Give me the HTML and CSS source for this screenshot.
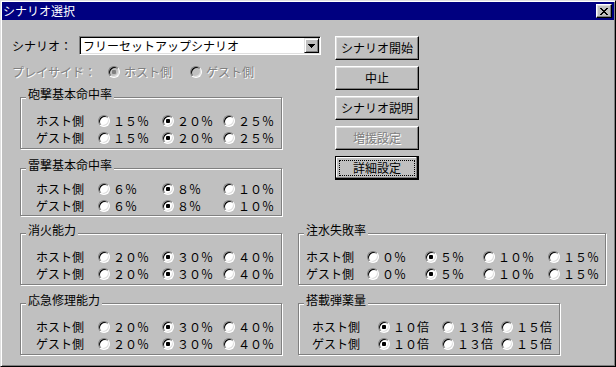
FILE: index.html
```html
<!doctype html>
<html>
  <head>
    <meta charset="UTF-8">
    <title>シナリオ選択</title>
    <link rel="stylesheet" href="styles.css">
  </head>
  <body>
    <div class="window">
      <div class="titlebar">
        <span class="title">シナリオ選択</span>
        <button class="close-btn" type="button" aria-label="閉じる">
          <svg width="8" height="7" viewBox="0 0 8 7" shape-rendering="crispEdges">
            <path d="M0 0h2v1H0zM6 0h2v1H6zM1 1h2v1H1zM5 1h2v1H5zM2 2h4v1H2zM3 3h2v1H3zM2 4h4v1H2zM1 5h2v1H1zM5 5h2v1H5zM0 6h2v1H0zM6 6h2v1H6z"/>
          </svg>
        </button>
      </div>

      <main class="content">
        <div class="top">
          <div class="top-left">
            <div class="scenario-row">
              <span class="row-label">シナリオ：</span>
              <div class="combo">
                <span class="combo-text">フリーセットアップシナリオ</span>
                <span class="combo-btn">
                  <svg width="7" height="4" viewBox="0 0 7 4" shape-rendering="crispEdges">
                    <path d="M0 0h7v1H0zM1 1h5v1H1zM2 2h3v1H2zM3 3h1v1H3z"/>
                  </svg>
                </span>
              </div>
            </div>

            <div class="side-row disabled">
              <span class="row-label">プレイサイド：</span>
              <label class="opt"><input type="radio" name="side" checked disabled><span>ホスト側</span></label>
              <label class="opt"><input type="radio" name="side" disabled><span>ゲスト側</span></label>
            </div>

            <fieldset class="group">
              <legend>砲撃基本命中率</legend>
              <div class="grid grid-left">
                <span>ホスト側</span>
                <label class="opt"><input type="radio" name="hou-h">１５％</label>
                <label class="opt"><input type="radio" name="hou-h" checked>２０％</label>
                <label class="opt"><input type="radio" name="hou-h">２５％</label>
                <span>ゲスト側</span>
                <label class="opt"><input type="radio" name="hou-g">１５％</label>
                <label class="opt"><input type="radio" name="hou-g" checked>２０％</label>
                <label class="opt"><input type="radio" name="hou-g">２５％</label>
              </div>
            </fieldset>

            <fieldset class="group">
              <legend>雷撃基本命中率</legend>
              <div class="grid grid-left grid-compact">
                <span>ホスト側</span>
                <label class="opt"><input type="radio" name="rai-h">６％</label>
                <label class="opt"><input type="radio" name="rai-h" checked>８％</label>
                <label class="opt"><input type="radio" name="rai-h">１０％</label>
                <span>ゲスト側</span>
                <label class="opt"><input type="radio" name="rai-g">６％</label>
                <label class="opt"><input type="radio" name="rai-g" checked>８％</label>
                <label class="opt"><input type="radio" name="rai-g">１０％</label>
              </div>
            </fieldset>
          </div>

          <div class="buttons">
            <button class="btn" type="button">シナリオ開始</button>
            <button class="btn" type="button">中止</button>
            <button class="btn" type="button">シナリオ説明</button>
            <button class="btn" type="button" disabled>増援設定</button>
            <button class="btn btn-default" type="button"><span class="focus">詳細設定</span></button>
          </div>
        </div>

        <div class="bottom">
          <fieldset class="group">
            <legend>消火能力</legend>
            <div class="grid grid-left">
              <span>ホスト側</span>
              <label class="opt"><input type="radio" name="fire-h">２０％</label>
              <label class="opt"><input type="radio" name="fire-h" checked>３０％</label>
              <label class="opt"><input type="radio" name="fire-h">４０％</label>
              <span>ゲスト側</span>
              <label class="opt"><input type="radio" name="fire-g">２０％</label>
              <label class="opt"><input type="radio" name="fire-g" checked>３０％</label>
              <label class="opt"><input type="radio" name="fire-g">４０％</label>
            </div>
          </fieldset>

          <fieldset class="group group-wide">
            <legend>注水失敗率</legend>
            <div class="grid grid-flood">
              <span>ホスト側</span>
              <label class="opt"><input type="radio" name="flood-h">０％</label>
              <label class="opt"><input type="radio" name="flood-h" checked>５％</label>
              <label class="opt"><input type="radio" name="flood-h">１０％</label>
              <label class="opt"><input type="radio" name="flood-h">１５％</label>
              <span>ゲスト側</span>
              <label class="opt"><input type="radio" name="flood-g">０％</label>
              <label class="opt"><input type="radio" name="flood-g" checked>５％</label>
              <label class="opt"><input type="radio" name="flood-g">１０％</label>
              <label class="opt"><input type="radio" name="flood-g">１５％</label>
            </div>
          </fieldset>

          <fieldset class="group">
            <legend>応急修理能力</legend>
            <div class="grid grid-left">
              <span>ホスト側</span>
              <label class="opt"><input type="radio" name="repair-h">２０％</label>
              <label class="opt"><input type="radio" name="repair-h" checked>３０％</label>
              <label class="opt"><input type="radio" name="repair-h">４０％</label>
              <span>ゲスト側</span>
              <label class="opt"><input type="radio" name="repair-g">２０％</label>
              <label class="opt"><input type="radio" name="repair-g" checked>３０％</label>
              <label class="opt"><input type="radio" name="repair-g">４０％</label>
            </div>
          </fieldset>

          <fieldset class="group">
            <legend>搭載弾薬量</legend>
            <div class="grid grid-ammo">
              <span>ホスト側</span>
              <label class="opt"><input type="radio" name="ammo-h" checked>１０倍</label>
              <label class="opt"><input type="radio" name="ammo-h">１３倍</label>
              <label class="opt"><input type="radio" name="ammo-h">１５倍</label>
              <span>ゲスト側</span>
              <label class="opt"><input type="radio" name="ammo-g" checked>１０倍</label>
              <label class="opt"><input type="radio" name="ammo-g">１３倍</label>
              <label class="opt"><input type="radio" name="ammo-g">１５倍</label>
            </div>
          </fieldset>
        </div>
      </main>
    </div>
  </body>
</html>
```

FILE: styles.css
```css
* {
    box-sizing: border-box;
}

body {
    margin: 0;
    background: #c0c0c0;
    color: #000;
    font: 12px/1 "Noto Sans CJK JP", sans-serif;
}

.window {
    width: 616px;
    height: 367px;
    padding: 1px;
    background: #c0c0c0;
    border: 1px solid;
    border-color: #dfdfdf #000 #000 #dfdfdf;
    box-shadow: inset 1px 1px #fff, inset -1px -1px #808080;
}

/* title bar */
.titlebar {
    display: flex;
    align-items: center;
    justify-content: space-between;
    height: 18px;
    padding: 0 2px 0 1px;
    background: #000080;
    color: #fff;
}

.close-btn {
    display: flex;
    align-items: center;
    justify-content: center;
    width: 16px;
    height: 14px;
    padding: 0;
    background: #c0c0c0;
    border: 1px solid;
    border-color: #fff #000 #000 #fff;
    box-shadow: inset -1px -1px #808080, inset 1px 1px #dfdfdf;
}

/* body */
.content {
    padding: 16px 0 0 10px;
}

.top {
    display: flex;
    align-items: flex-start;
}

.top-left {
    width: 309px;
}

.scenario-row {
    display: flex;
    align-items: center;
    gap: 7px;
}

.row-label {
    white-space: nowrap;
}

.combo {
    display: flex;
    align-items: center;
    width: 242px;
    height: 19px;
    padding: 1px 1px 1px 3px;
    background: #fff;
    border: 1px solid;
    border-color: #808080 #fff #fff #808080;
    box-shadow: inset 1px 1px #000, inset -1px -1px #dfdfdf;
}

.combo-text {
    flex: 1;
}

.combo-btn {
    display: flex;
    align-items: center;
    justify-content: center;
    width: 15px;
    height: 15px;
    background: #c0c0c0;
    border: 1px solid;
    border-color: #dfdfdf #000 #000 #dfdfdf;
    box-shadow: inset 1px 1px #fff, inset -1px -1px #808080;
}

.side-row {
    display: flex;
    align-items: center;
    height: 16px;
    margin-top: 9px;
}

.side-row .opt:first-of-type {
    margin-left: 12px;
}

.side-row .opt + .opt {
    margin-left: 18px;
}

.disabled {
    color: #808080;
    text-shadow: 1px 1px 0 #fff;
}

/* radio buttons */
.opt {
    display: flex;
    align-items: center;
    gap: 3px;
    white-space: nowrap;
}

.side-row .opt {
    gap: 4px;
}

input[type="radio"] {
    appearance: none;
    flex: none;
    width: 12px;
    height: 12px;
    margin: 0;
    border-radius: 50%;
    background: #fff;
    border: 1px solid;
    border-color: #808080 #fff #fff #808080;
    box-shadow: inset 1px 1px #000, inset -1px -1px #dfdfdf;
}

input[type="radio"]:checked {
    background: radial-gradient(circle, #000 0 2px, #fff 2.5px);
}

input[type="radio"]:disabled {
    background: #c0c0c0;
}

input[type="radio"]:disabled:checked {
    background: radial-gradient(circle, #808080 0 2px, #c0c0c0 2.5px);
}

/* group boxes */
.group {
    width: 262px;
    margin: 0;
    padding: 0;
    border: 1px solid #808080;
    box-shadow: inset 1px 1px #fff, 1px 1px #fff;
    min-width: 0;
}

.top-left .group {
    margin: 6px 0 0 8px;
}

.top-left .group + .group {
    margin-top: 8px;
}

.group legend {
    margin-left: 5px;
    padding: 1px 2px 7px;
    line-height: 14px;
    background: #c0c0c0;
}

.group-wide {
    width: 308px;
}

.grid {
    display: grid;
    grid-auto-rows: 17px;
    align-items: center;
    padding: 4px 0 2px 15px;
    white-space: nowrap;
}

.grid-compact {
    padding-top: 1px;
    padding-bottom: 1px;
}

.grid-left {
    grid-template-columns: 62px 64px 61px auto;
}

.grid-flood {
    padding-left: 7px;
    grid-template-columns: 61px 58px 58px 65px auto;
}

.grid-ammo {
    padding-left: 13px;
    grid-template-columns: 66px 64px 59px auto;
}

.bottom {
    display: grid;
    grid-template-columns: 262px 308px;
    column-gap: 16px;
    row-gap: 7px;
    align-items: start;
    margin: 6px 0 0 8px;
}

/* push buttons */
.buttons {
    display: flex;
    flex-direction: column;
    gap: 6px;
    margin-left: 14px;
}

.btn {
    width: 84px;
    height: 24px;
    padding: 0;
    font: inherit;
    color: #000;
    background: #c0c0c0;
    border: 1px solid;
    border-color: #fff #000 #000 #fff;
    box-shadow: inset -1px -1px #808080, inset 1px 1px #dfdfdf;
}

.btn:disabled {
    color: #808080;
    text-shadow: 1px 1px 0 #fff;
}

.btn-default {
    padding: 3px;
    border-color: #000;
    box-shadow: inset -1px -1px #000, inset -2px -2px #808080, inset 1px 1px #fff;
}

.btn-default .focus {
    display: block;
    height: 100%;
    line-height: 14px;
    border: 1px dotted #000;
}
```
